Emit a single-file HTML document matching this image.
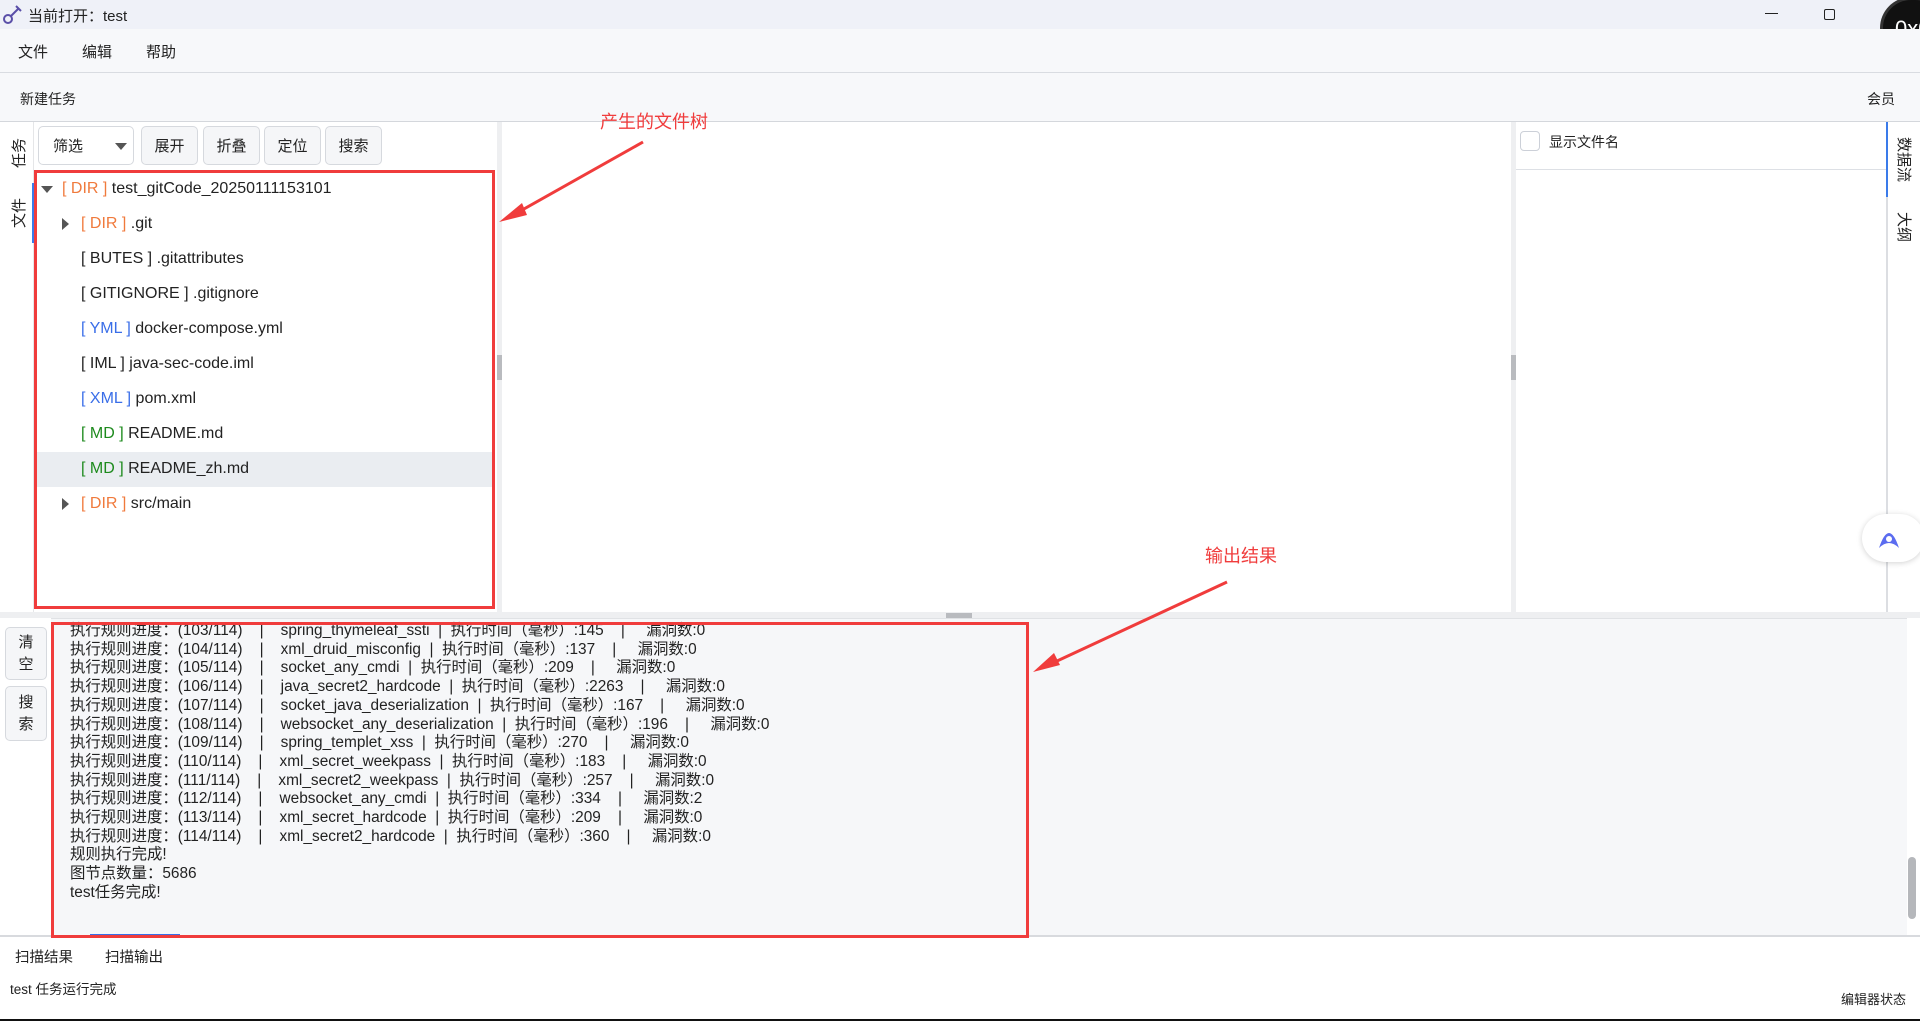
<!DOCTYPE html>
<html><head><meta charset="utf-8">
<style>
*{margin:0;padding:0;box-sizing:border-box}
body{width:1920px;height:1021px;position:relative;overflow:hidden;background:#fff;font-family:"Liberation Sans","Noto Sans CJK SC",sans-serif;color:#222;font-size:15px}
.a{position:absolute}
.btn{position:absolute;top:126px;height:39px;border:1px solid #d6d9de;border-radius:5px;background:#f5f6f8;font-size:15px;display:flex;align-items:center;justify-content:center}
.row{position:absolute;height:35px;line-height:35px;font-size:16px;white-space:nowrap}
.o{color:#f07a3c}.b{color:#3a6ee8}.g{color:#1d8a1d}
.tri{display:inline-block;width:0;height:0;position:absolute}
.vt{writing-mode:vertical-rl;text-orientation:sideways;font-size:15px;position:absolute}
.vl{transform:rotate(180deg)}
.out{position:absolute;left:70px;font-size:15.4px;white-space:pre;line-height:18.7px}
</style></head><body>
<!-- title bar -->
<div class="a" style="left:0;top:0;width:1920px;height:29px;background:#eff1f8"></div>
<svg class="a" style="left:2px;top:3px" width="22" height="22" viewBox="0 0 22 22"><circle cx="6" cy="16" r="4" fill="none" stroke="#5a4fa8" stroke-width="2"/><path d="M9 13 L17 5 M14 3 L19 8" stroke="#5a4fa8" stroke-width="2" fill="none"/></svg>
<div class="a" style="left:28px;top:5px;font-size:15px">当前打开：test</div>
<div class="a" style="left:1765px;top:13px;width:13px;height:1px;background:#222"></div>
<div class="a" style="left:1824px;top:9px;width:11px;height:11px;border:1.5px solid #222;border-radius:2px"></div>
<div class="a" style="left:1883px;top:0;width:60px;height:56px;border-radius:28px;background:#111;box-shadow:0 0 0 3px #333"></div>
<div class="a" style="left:1895px;top:16px;color:#fff;font-size:22px">0x0</div>
<!-- menu -->
<div class="a" style="left:0;top:29px;width:1920px;height:44px;background:#f7f8fa;border-bottom:1px solid #d9dce1"></div>
<div class="a" style="left:18px;top:41px;font-size:15px">文件</div>
<div class="a" style="left:82px;top:41px;font-size:15px">编辑</div>
<div class="a" style="left:146px;top:41px;font-size:15px">帮助</div>
<div class="a" style="left:0;top:73px;width:1920px;height:49px;background:#f7f8fa;border-bottom:1px solid #d4d7dc"></div>
<div class="a" style="left:20px;top:89px;font-size:14px">新建任务</div>
<div class="a" style="left:1867px;top:89px;font-size:14px">会员</div>
<!-- left vertical tabs -->
<div class="a" style="left:0;top:122px;width:34px;height:490px;background:#fff;border-right:1px solid #e5e6e8"></div>
<div class="vt vl" style="left:8px;top:138px">任务</div>
<div class="vt vl" style="left:8px;top:198px">文件</div>
<div class="a" style="left:32px;top:183px;width:2px;height:60px;background:#3a7bea"></div>
<!-- tree toolbar -->
<div class="btn" style="left:38px;width:96px;background:#fff;justify-content:flex-start;padding-left:14px">筛选<span class="tri" style="left:76px;top:16px;border-left:6px solid transparent;border-right:6px solid transparent;border-top:7px solid #555"></span></div>
<div class="btn" style="left:141px;width:57px">展开</div>
<div class="btn" style="left:203px;width:57px">折叠</div>
<div class="btn" style="left:264px;width:57px">定位</div>
<div class="btn" style="left:325px;width:57px">搜索</div>
<!-- tree -->
<div class="a" style="left:37px;top:452px;width:456px;height:35px;background:#eaedf1"></div>
<span class="tri" style="left:41px;top:186px;border-left:6px solid transparent;border-right:6px solid transparent;border-top:7px solid #555"></span>
<div class="row" style="left:62px;top:171px"><span class="o">[ DIR ]</span> test_gitCode_20250111153101</div>
<span class="tri" style="left:62px;top:218px;border-top:6px solid transparent;border-bottom:6px solid transparent;border-left:7px solid #555"></span>
<div class="row" style="left:81px;top:206px"><span class="o">[ DIR ]</span> .git</div>
<div class="row" style="left:81px;top:241px">[ BUTES ] .gitattributes</div>
<div class="row" style="left:81px;top:276px">[ GITIGNORE ] .gitignore</div>
<div class="row" style="left:81px;top:311px"><span class="b">[ YML ]</span> docker-compose.yml</div>
<div class="row" style="left:81px;top:346px">[ IML ] java-sec-code.iml</div>
<div class="row" style="left:81px;top:381px"><span class="b">[ XML ]</span> pom.xml</div>
<div class="row" style="left:81px;top:416px"><span class="g">[ MD ]</span> README.md</div>
<div class="row" style="left:81px;top:451px"><span class="g">[ MD ]</span> README_zh.md</div>
<span class="tri" style="left:62px;top:498px;border-top:6px solid transparent;border-bottom:6px solid transparent;border-left:7px solid #555"></span>
<div class="row" style="left:81px;top:486px"><span class="o">[ DIR ]</span> src/main</div>
<div class="a" style="left:34px;top:170px;width:461px;height:439px;border:3px solid #f03c3c"></div>
<!-- splitters -->
<div class="a" style="left:497px;top:122px;width:5px;height:490px;background:#eeeff1"></div>
<div class="a" style="left:497px;top:355px;width:5px;height:25px;background:#b9bbbf"></div>
<div class="a" style="left:1511px;top:122px;width:5px;height:490px;background:#eeeff1"></div>
<div class="a" style="left:1511px;top:355px;width:5px;height:25px;background:#b9bbbf"></div>
<!-- right panel -->
<div class="a" style="left:1520px;top:131px;width:20px;height:20px;border:1.5px solid #ccd0d8;border-radius:4px"></div>
<div class="a" style="left:1549px;top:132px;font-size:14px">显示文件名</div>
<div class="a" style="left:1516px;top:169px;width:370px;height:1px;background:#dde0e5"></div>
<div class="a" style="left:1886px;top:122px;width:2px;height:490px;background:#dcdee2"></div>
<div class="a" style="left:1886px;top:122px;width:2px;height:75px;background:#3a7bea"></div>
<div class="vt" style="left:1894px;top:137px">数据流</div>
<div class="vt" style="left:1894px;top:212px">大纲</div>
<div class="a" style="left:1862px;top:514px;width:62px;height:48px;border-radius:24px;background:#fff;box-shadow:0 1px 6px rgba(0,0,0,.18)"></div>
<svg class="a" style="left:1875px;top:524px" width="28" height="28" viewBox="0 0 28 28"><path d="M4 24 Q14 -6 24 24 Q14 14 4 24Z" fill="#5b6cf0"/><circle cx="14" cy="15" r="3" fill="#fff"/></svg>
<!-- bottom -->
<div class="a" style="left:0;top:612px;width:1920px;height:6px;background:#eeeff1"></div>
<div class="a" style="left:946px;top:613px;width:26px;height:5px;background:#b9bbbf"></div>
<div class="a" style="left:5px;top:627px;width:42px;height:53px;border:1px solid #d6d9de;border-radius:5px;background:#f5f6f8;font-size:15px;text-align:center;line-height:22px;padding-top:4px">清<br>空</div>
<div class="a" style="left:5px;top:686px;width:42px;height:55px;border:1px solid #d6d9de;border-radius:5px;background:#f5f6f8;font-size:15px;text-align:center;line-height:22px;padding-top:5px">搜<br>索</div>
<div class="a" style="left:51px;top:618px;width:1856px;height:317px;background:#f6f7f9;border-top:1px solid #e0e2e5"></div>
<div class="a" style="left:1908px;top:857px;width:8px;height:62px;background:#b5b7bb;border-radius:4px"></div>
<div class="out" style="top:622px">执行规则进度：(103/114)    |    spring_thymeleaf_ssti  |  执行时间（毫秒）:145    |     漏洞数:0
执行规则进度：(104/114)    |    xml_druid_misconfig  |  执行时间（毫秒）:137    |     漏洞数:0
执行规则进度：(105/114)    |    socket_any_cmdi  |  执行时间（毫秒）:209    |     漏洞数:0
执行规则进度：(106/114)    |    java_secret2_hardcode  |  执行时间（毫秒）:2263    |     漏洞数:0
执行规则进度：(107/114)    |    socket_java_deserialization  |  执行时间（毫秒）:167    |     漏洞数:0
执行规则进度：(108/114)    |    websocket_any_deserialization  |  执行时间（毫秒）:196    |     漏洞数:0
执行规则进度：(109/114)    |    spring_templet_xss  |  执行时间（毫秒）:270    |     漏洞数:0
执行规则进度：(110/114)    |    xml_secret_weekpass  |  执行时间（毫秒）:183    |     漏洞数:0
执行规则进度：(111/114)    |    xml_secret2_weekpass  |  执行时间（毫秒）:257    |     漏洞数:0
执行规则进度：(112/114)    |    websocket_any_cmdi  |  执行时间（毫秒）:334    |     漏洞数:2
执行规则进度：(113/114)    |    xml_secret_hardcode  |  执行时间（毫秒）:209    |     漏洞数:0
执行规则进度：(114/114)    |    xml_secret2_hardcode  |  执行时间（毫秒）:360    |     漏洞数:0
规则执行完成!
图节点数量：5686
test任务完成!</div>
<div class="a" style="left:0;top:935px;width:1920px;height:2px;background:#d8dade"></div>
<div class="a" style="left:90px;top:934px;width:90px;height:3px;background:#3a6ee8"></div>
<div class="a" style="left:51px;top:622px;width:978px;height:316px;border:3px solid #f03c3c"></div>
<div class="a" style="left:15px;top:946px;font-size:14.5px">扫描结果</div>
<div class="a" style="left:105px;top:946px;font-size:14.5px">扫描输出</div>
<div class="a" style="left:10px;top:978px;font-size:13.5px">test 任务运行完成</div>
<div class="a" style="left:1841px;top:989px;font-size:13px">编辑器状态</div>
<div class="a" style="left:0;top:1019px;width:1920px;height:2px;background:#111"></div>
<!-- annotations -->
<div class="a" style="left:600px;top:108px;color:#f03c3c;font-size:18px">产生的文件树</div>
<svg class="a" style="left:0;top:0;z-index:5" width="1920" height="1021"><path d="M643 142 L508 218" stroke="#f03c3c" stroke-width="3"/><path d="M499 222 L522 203 L527 215Z" fill="#f03c3c"/><path d="M1227 582 L1042 668" stroke="#f03c3c" stroke-width="3"/><path d="M1033 672 L1054 653 L1060 665Z" fill="#f03c3c"/></svg>
<div class="a" style="left:1205px;top:542px;color:#f03c3c;font-size:18px">输出结果</div>
</body></html>
